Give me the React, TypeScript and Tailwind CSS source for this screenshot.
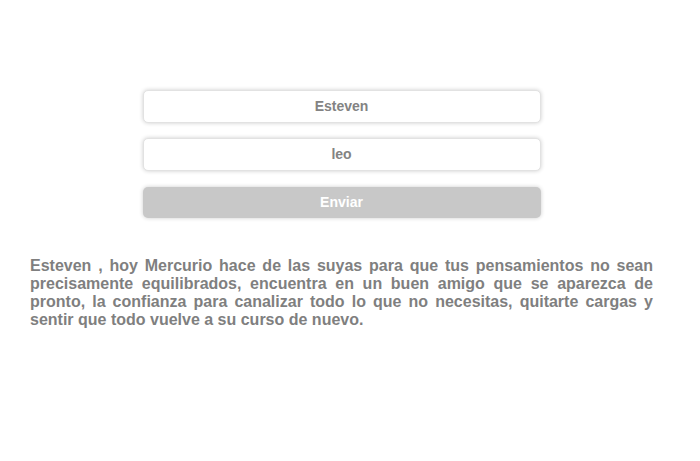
import React from "react";

export default function App() {
  return (
    <div className="w-[683px] bg-white min-h-[461px]" style={{ fontFamily: '"Liberation Sans", Arial, sans-serif' }}>
      <div className="pt-[90px] flex flex-col items-center">
        <div className="w-[398px] flex flex-col">
          <div className="h-[33px] rounded-[5px] border border-[#e2e2e2] bg-white shadow-[0_0_4px_rgba(0,0,0,0.2)] flex items-center justify-center text-[14px] font-bold text-[#838383]">
            Esteven
          </div>
          <div className="mt-[15px] h-[33px] rounded-[5px] border border-[#e2e2e2] bg-white shadow-[0_0_4px_rgba(0,0,0,0.2)] flex items-center justify-center text-[14px] font-bold text-[#838383]">
            leo
          </div>
          <div className="mt-[16px] h-[31px] rounded-[5px] bg-[#c8c8c8] shadow-[0_0_4px_rgba(0,0,0,0.2)] flex items-center justify-center text-[14px] font-bold text-white">
            Enviar
          </div>
        </div>
      </div>
      <p className="mt-[39px] px-[30px] text-[16px] leading-[18px] font-bold text-[#7f7f7f] text-justify">
        Esteven , hoy Mercurio hace de las suyas para que tus pensamientos no sean precisamente equilibrados, encuentra en un buen amigo que se aparezca de pronto, la confianza para canalizar todo lo que no necesitas, quitarte cargas y sentir que todo vuelve a su curso de nuevo.
      </p>
    </div>
  );
}
